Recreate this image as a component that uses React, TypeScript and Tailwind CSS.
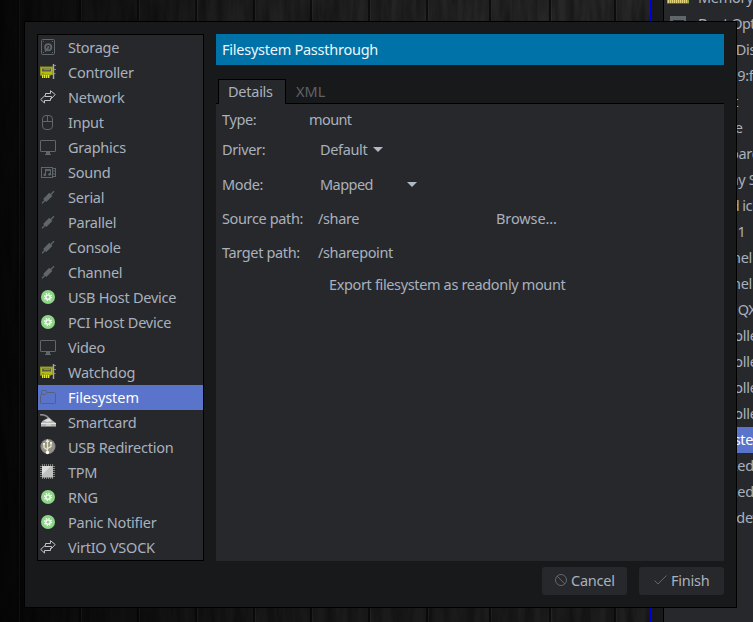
import React from "react";

type IconName =
  | "disk" | "card" | "net" | "mouse" | "monitor" | "sound" | "plug"
  | "gear" | "folder" | "reader" | "usb" | "chip";

const G = "#5f676b";

function Icon({ name }: { name: IconName }) {
  return (
    <svg width="16" height="16" viewBox="0 0 16 16" fill="none" className="shrink-0">
      {name === "disk" && (
        <g>
          <rect x="1.5" y=".5" width="13" height="15" rx="1.2" stroke={G} />
          <path d="M3 2.500h1M12 2.500h1M3 13.500h1M12 13.500h1" stroke={G} />
          <circle cx="8.2" cy="8.300" r="3.1" stroke={G} strokeWidth="1.8" />
          <path d="M8.5 8.500 5 12.500" stroke={G} strokeWidth="1.6" />
          <circle cx="8.3" cy="8" r="1" fill={G} />
        </g>
      )}
      {name === "card" && (
        <g>
          <rect x="0" y="2.500" width="13" height="8.500" fill="#8d9114" />
          <rect x="1" y="3.500" width="11" height="7" fill="#b4b914" />
          <rect x="2" y="4.500" width="9" height="3" fill="#565e45" />
          <path d="M4 5.500h6M2 9.500h2" stroke="#7c8898" />
          <rect x="0" y="11" width="11" height="1" fill="#6b7010" />
          <path d="M2 12.500h8" stroke="#e4ea18" strokeWidth="3" strokeDasharray="1.4 .6" />
          <path d="M13.500 0v15" stroke="#a6aaa8" strokeWidth="1.4" />
          <path d="M14 1.500h2M14 5.500h2M14 9.500h1.500" stroke="#858987" />
        </g>
      )}
      {name === "net" && (
        <g stroke="#c0c2c4">
          <path d="M5.500 6.500V4.500h5V1.700L15.200 5.500 11.500 9.500V7.500" />
          <path d="M11.500 7.500H5V6.500L.7 10.500l3.800 3.500V11.500h6V9" />
        </g>
      )}
      {name === "mouse" && (
        <g stroke={G}>
          <rect x="2.500" y="1.500" width="10" height="14" rx="3.500" />
          <path d="M2.500 7.500h10M7.500 2v5.500" />
        </g>
      )}
      {name === "monitor" && (
        <g>
          <rect x=".5" y="1.500" width="15" height="11" rx=".5" stroke={G} />
          <path d="M6 13h4v2h1v1H5v-1h1z" fill={G} />
        </g>
      )}
      {name === "sound" && (
        <g>
          <rect x="1.500" y="3.500" width="11" height="10" stroke={G} />
          <path d="M5.500 11V6.500h5V10" stroke={G} />
          <path d="M5 6h6" stroke={G} strokeWidth="1.800" />
          <circle cx="4.800" cy="10.800" r="1.400" fill={G} />
          <circle cx="9.700" cy="10.300" r="1.400" fill={G} />
          <path d="M13 4.500h3M13 7h2M13 10h2M13 12.500h3M15.500 4v9" stroke={G} />
        </g>
      )}
      {name === "plug" && (
        <g stroke={G}>
          <path d="M2 14.200 14 2.200" strokeWidth="1.300" />
          <path d="M4.700 11.500 10.800 5.400" strokeWidth="4.400" />
        </g>
      )}
      {name === "gear" && (
        <g>
          <circle cx="8" cy="8" r="7" fill="#8ed687" />
          <circle cx="8" cy="8" r="2.200" stroke="#fff" strokeWidth="1.300" />
          <circle cx="8" cy="8" r="3.500" stroke="#fff" strokeWidth="1.300" strokeDasharray="1.200 1.549" />
        </g>
      )}
      {name === "folder" && (
        <g stroke="#566078">
          <path d="M.5 14V6.500l1-1h3.500l2-2h7.500l1 1v9.500l-1 .5h-13z" />
          <path d="M1.500 5.500V2l1-.5h3.500l1 1v1" />
        </g>
      )}
      {name === "reader" && (
        <g>
          <path d="M0 .6C5 .6 8 1.500 9 5.500" stroke="#8a8d8b" strokeWidth="1.600" />
          <path d="M3 6.500 9 3.500l4 3.500 3 2v3H1V9z" fill="#b3b6b4" />
          <path d="M4 6.500 9 4.500l3 2.500-5 1z" fill="#e2e4e2" />
          <path d="M1 9.500h15M6 11h5" stroke="#e4e6e4" />
          <path d="M1 12.500h15" stroke="#777b79" />
        </g>
      )}
      {name === "usb" && (
        <g>
          <circle cx="8" cy="7.500" r="7.500" fill="#85878a" />
          <circle cx="8" cy="7.500" r="6.500" fill="#929290" />
          <path d="M7.500 14V2M7.500 11 4 8.500V5M7.500 9.500 11 7.500V4.500" stroke="#f0e7ae" strokeWidth="1.300" />
          <path d="m7.500 0 2 3h-4z" fill="#f6efbd" />
          <circle cx="7.500" cy="13.500" r="1.700" fill="#fffef0" />
          <path d="M3 4h2v2H3zM10 3h2v2h-2z" fill="#f6efbd" />
        </g>
      )}
      {name === "chip" && (
        <g>
          <path d="M2 1h12M2 14h12" stroke="#7c807e" strokeWidth="2" strokeDasharray="1 1" />
          <path d="M1 2v12M14 2v12" stroke="#7c807e" strokeWidth="2" strokeDasharray="1 1" />
          <rect x="2" y="2" width="11" height="11.500" fill="#bfc1bf" />
          <path d="M2 2h9L2 11z" fill="#dcdddc" />
        </g>
      )}
    </svg>
  );
}

const devices: [string, IconName][] = [
  ["Storage", "disk"],
  ["Controller", "card"],
  ["Network", "net"],
  ["Input", "mouse"],
  ["Graphics", "monitor"],
  ["Sound", "sound"],
  ["Serial", "plug"],
  ["Parallel", "plug"],
  ["Console", "plug"],
  ["Channel", "plug"],
  ["USB Host Device", "gear"],
  ["PCI Host Device", "gear"],
  ["Video", "monitor"],
  ["Watchdog", "card"],
  ["Filesystem", "folder"],
  ["Smartcard", "reader"],
  ["USB Redirection", "usb"],
  ["TPM", "chip"],
  ["RNG", "gear"],
  ["Panic Notifier", "gear"],
  ["VirtIO VSOCK", "net"],
];

// Name and letter spacing of each row in the window behind the dialog.
const hardware: [string, string][] = [
  ["Memory", "tracking-[-0.3px]"],
  ["Boot Options", "tracking-[-0.55px]"],
  ["SATA Disk 1", "pl-[3px] tracking-[-0.3px]"],
  ["NIC :39:f9:f5", "tracking-[-0.3px]"],
  ["Tablet", "tracking-[-0.1px]"],
  ["Mouse", "tracking-[-0.3px]"],
  ["Keyboard", "tracking-[-0.3px]"],
  ["Display Spice", "tracking-[-0.3px]"],
  ["Sound ich9", "tracking-[-0.5px]"],
  ["Serial 1", "tracking-[-0.3px]"],
  ["Channel qemu-ga", "tracking-[-0.3px]"],
  ["Channel spice", "tracking-[-0.3px]"],
  ["Video QXL", "tracking-[-0.4px]"],
  ["Controller USB", "tracking-[-0.3px]"],
  ["Controller PCIe", "tracking-[-0.3px]"],
  ["Controller SATA", "tracking-[-0.3px]"],
  ["Controller VirtIO", "tracking-[-0.3px]"],
  ["Filesystem", "tracking-[-0.3px]"],
  ["USB Redirector 1", "tracking-[-0.3px]"],
  ["USB Redirector 2", "tracking-[-0.3px]"],
  ["RNG /dev/urandom", "tracking-[-0.3px]"],
];

const planks = [18, 80, 138, 196, 254, 311, 369, 427, 490, 550, 615];

function Wood() {
  return (
    <svg width="651" height="622" className="absolute left-0 top-0">
      <defs>
        <linearGradient id="shade">
          <stop offset="0" stopColor="#070707" />
          <stop offset=".12" stopColor="#111111" />
          <stop offset=".4" stopColor="#202020" />
          <stop offset="1" stopColor="#292929" />
        </linearGradient>
        <linearGradient id="fall" x2="0" y2="1">
          <stop offset="0" stopColor="#000" stopOpacity="0" />
          <stop offset="1" stopColor="#000" stopOpacity=".25" />
        </linearGradient>
        <filter id="grain" x="0" y="0" width="100%" height="100%">
          <feTurbulence type="fractalNoise" baseFrequency=".12 .015" numOctaves="4" seed="4" />
          <feColorMatrix values="0 0 0 0 0  0 0 0 0 0  0 0 0 0 0  .8 0 0 0 -.24" />
        </filter>
      </defs>
      <rect width="651" height="622" fill="url(#shade)" />
      <rect width="651" height="622" filter="url(#grain)" />
      <rect width="651" height="622" fill="url(#fall)" />
      {planks.map((x) => (
        <g key={x}>
          <rect x={x - 1} width="2" height="622" fill="#060606" opacity=".7" />
          <rect x={x + 1} width="1" height="622" fill="#fff" opacity=".04" />
        </g>
      ))}
    </svg>
  );
}

function Caret() {
  return (
    <svg width="10" height="5" viewBox="0 0 10 5">
      <path d="M0 0h10L5 5z" fill="#afb8c6" />
    </svg>
  );
}

function Field({ label, height, children }: { label: string; height: string; children: React.ReactNode }) {
  return (
    <div className={`flex items-center ${height}`}>
      <span className="w-[87px] pl-px">{label}</span>
      {children}
    </div>
  );
}

export default function App() {
  return (
    <div className="relative h-[622px] w-[753px] overflow-hidden whitespace-nowrap bg-[#101010] font-['Noto_Sans',sans-serif] text-[14.5px] leading-[20px] tracking-[-0.25px] text-[#a9b1bd]">
      <Wood />

      <div className="absolute left-[650px] top-0 flex h-[622px] w-[103px] border-l border-[#0000d8] bg-[#18191b] pl-3">
        <div className="w-[90px] shrink-0 overflow-hidden border-l border-black bg-[#27282c]">
          <div className="-mt-[15px]">
            {hardware.map(([name, spacing], i) => (
              <div
                key={i}
                className={`flex h-[26px] items-center ${i === 17 ? "bg-[#5a73cb] text-white" : ""}`}
              >
                <div className="flex w-[34px] shrink-0 pl-[3px]">
                  {i === 0 && (
                    <svg width="22" height="22" viewBox="0 0 22 22">
                      <rect x="0" y="4" width="22" height="12" fill="#8fa83a" />
                      <path d="M1 14h20" stroke="#e3d27a" strokeWidth="4" strokeDasharray="1 1" />
                      <rect x="0" y="16" width="22" height="1" fill="#4a6b1c" />
                    </svg>
                  )}
                  {i === 1 && (
                    <svg width="22" height="22" viewBox="0 0 22 22">
                      <rect x="3" y="3" width="16" height="16" fill={G} />
                      <rect x="6" y="7" width="11" height="9" fill="#27282c" />
                    </svg>
                  )}
                </div>
                <span className={`-mt-0.5 ${spacing}`}>{name}</span>
              </div>
            ))}
          </div>
        </div>
      </div>

      <div className="absolute left-[24px] top-[21px] flex h-[587px] w-[713px] flex-col border border-black bg-[#18191b] pl-3 pr-3 pt-3">
        <div className="flex gap-3">
          <div className="h-[527px] w-[167px] border border-black bg-[#27282c]">
            {devices.map(([label, icon]) => (
              <div
                key={label}
                className={`flex h-[25px] pl-[2px] ${label === "Filesystem" ? "bg-[#5a73cb] tracking-[-0.05px] text-white" : ""}`}
              >
                <div className="w-7 pt-1">
                  <Icon name={icon} />
                </div>
                <span className="pt-[2px]">{label}</span>
              </div>
            ))}
          </div>

          <div className="flex w-[508px] flex-col">
            <div className="h-[31px] bg-[#0072a8] pl-[6px] pt-[5px] text-[#eef6fa]">
              Filesystem Passthrough
            </div>
            <div className="mt-[14px] flex h-[25px]">
              <div className="w-[2px] border-b border-black" />
              <div className="w-[68px] border-x border-t border-black bg-[#27282c] pl-[9px] pt-px">
                Details
              </div>
              <div className="flex-1 border-b border-black pl-[10px] pt-[2px] tracking-normal text-[#5d626b]">
                XML
              </div>
            </div>
            <div className="h-[457px] bg-[#27282c] pl-[5px] tracking-[-0.36px]">
              <Field label="Type:" height="h-[30px]">
                <span className="pl-px tracking-[-0.6px]">mount</span>
              </Field>
              <Field label="Driver:" height="h-[30px]">
                <span className="w-[65px] pl-[12px]">Default</span>
                <Caret />
              </Field>
              <Field label="Mode:" height="h-[40px]">
                <span className="w-[99px] pl-[12px] tracking-[-0.55px]">Mapped</span>
                <Caret />
              </Field>
              <Field label="Source path:" height="h-[28px]">
                <span className="w-[188px] pl-[10px]">/share</span>
                <span className="tracking-[-0.1px]">Browse...</span>
              </Field>
              <Field label="Target path:" height="h-[40px]">
                <span className="pl-[10px]">/sharepoint</span>
              </Field>
              <Field label="" height="h-[24px]">
                <span className="pl-[21px]">Export filesystem as readonly mount</span>
              </Field>
            </div>
          </div>
        </div>

        <div className="mt-[6px] flex justify-end gap-3">
          <button className="flex h-[28px] w-[85px] items-center rounded-[3px] bg-[#27282c] pb-0.5 pl-[13px]">
            <svg width="12" height="12" viewBox="0 0 12 12" fill="none" stroke={G} className="mr-1">
              <circle cx="6" cy="6" r="5.500" />
              <path d="m2 2 8 8" />
            </svg>
            Cancel
          </button>
          <button className="flex h-[28px] w-[85px] items-center rounded-[3px] bg-[#27282c] pb-0.5 pl-[15px]">
            <svg width="13" height="10" viewBox="0 0 13 10" fill="none" stroke={G} className="mr-1">
              <path d="m.5 5.500 3.500 3.500L12.500.5" />
            </svg>
            Finish
          </button>
        </div>
      </div>
    </div>
  );
}
